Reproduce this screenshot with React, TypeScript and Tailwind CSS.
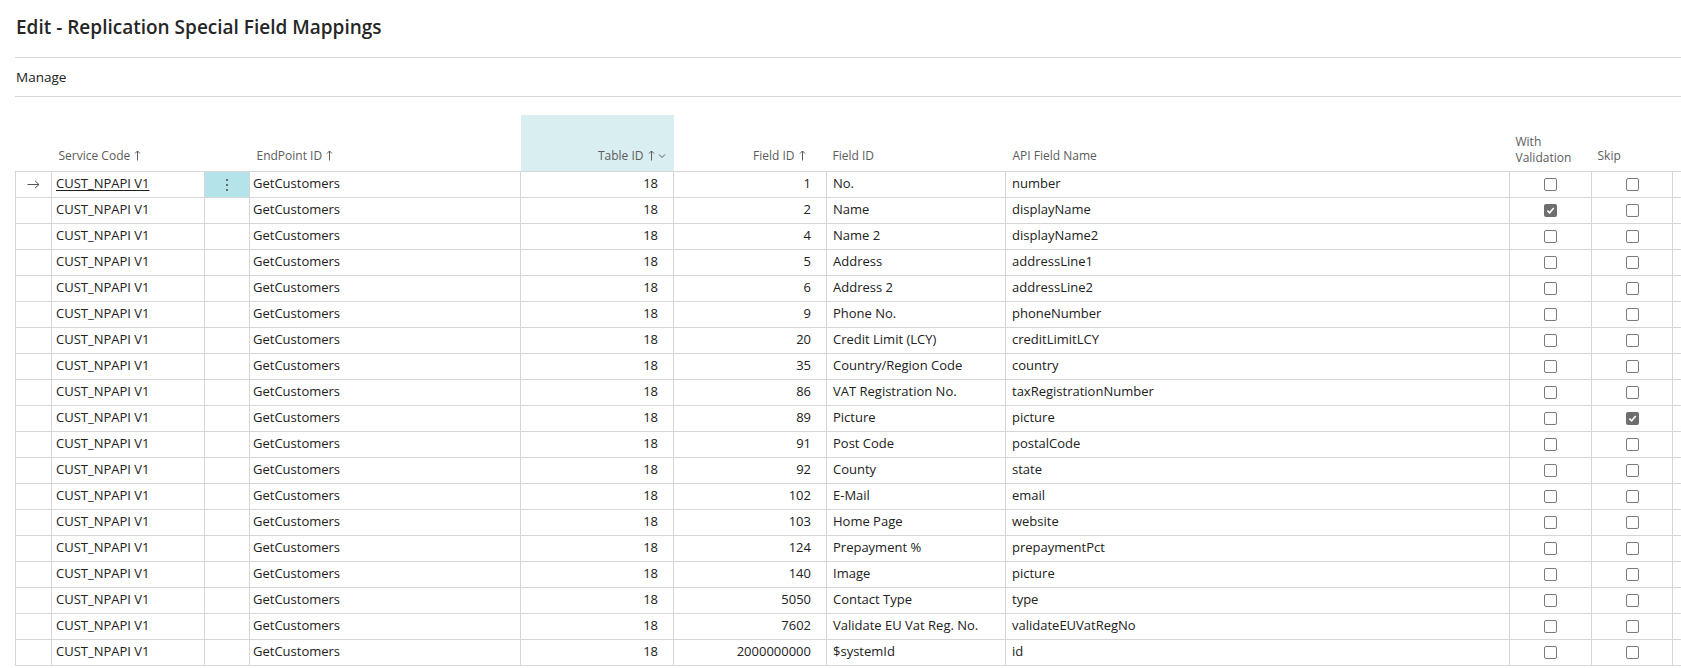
import React from "react";

const rows: [number, string, string, boolean, boolean][] = [
  [1, "No.", "number", false, false],
  [2, "Name", "displayName", true, false],
  [4, "Name 2", "displayName2", false, false],
  [5, "Address", "addressLine1", false, false],
  [6, "Address 2", "addressLine2", false, false],
  [9, "Phone No.", "phoneNumber", false, false],
  [20, "Credit Limit (LCY)", "creditLimitLCY", false, false],
  [35, "Country/Region Code", "country", false, false],
  [86, "VAT Registration No.", "taxRegistrationNumber", false, false],
  [89, "Picture", "picture", false, true],
  [91, "Post Code", "postalCode", false, false],
  [92, "County", "state", false, false],
  [102, "E-Mail", "email", false, false],
  [103, "Home Page", "website", false, false],
  [124, "Prepayment %", "prepaymentPct", false, false],
  [140, "Image", "picture", false, false],
  [5050, "Contact Type", "type", false, false],
  [7602, "Validate EU Vat Reg. No.", "validateEUVatRegNo", false, false],
  [2000000000, "$systemId", "id", false, false],
];

const Check = ({ on }: { on: boolean }) =>
  on ? (
    <span className="inline-flex h-[13px] w-[13px] items-center justify-center rounded-[2px] bg-[#6e6e6e] align-middle">
      <svg width="9" height="9" viewBox="0 0 10 10">
        <path d="M1.5 5.2 L4 7.6 L8.6 2.2" fill="none" stroke="#fff" strokeWidth="1.8" />
      </svg>
    </span>
  ) : (
    <span className="inline-block h-[13px] w-[13px] rounded-[2px] border border-[#7a7a7a] bg-white align-middle" />
  );

// thin sort arrow used in the header labels
const Up = () => (
  <svg className="ml-[4px] inline-block align-[-1px]" width="7" height="11" viewBox="0 0 7 11">
    <path d="M3.5 10.5 V1 M1 3.5 L3.5 1 L6 3.5" fill="none" stroke="#5c5c5c" strokeWidth="1" />
  </svg>
);

const td = "h-[26px] border border-[#d6d6d6] p-0 whitespace-nowrap overflow-hidden";

export default function App() {
  return (
    <div
      className="h-[668px] w-[1681px] overflow-hidden bg-white text-[#212121]"
      style={{ fontFamily: '"Open Sans", "Noto Sans", sans-serif' }}
    >
      <div className="pl-[15px]">
        <div className="flex h-[57px] items-center pl-px pb-[2px] text-[19px] font-semibold text-[#262626]">
          Edit - Replication Special Field Mappings
        </div>
        <div className="flex h-[40px] items-center border-y border-[#d6d6d6] pl-px text-[13.5px]">Manage</div>

        <div className="pt-[18px]">
          <table className="table-fixed border-collapse text-[13px]" style={{ width: 1700 }}>
            <colgroup>
              <col className="w-[36px]" />
              <col className="w-[153px]" />
              <col className="w-[45px]" />
              <col className="w-[271px]" />
              <col className="w-[153px]" />
              <col className="w-[153px]" />
              <col className="w-[179px]" />
              <col className="w-[504px]" />
              <col className="w-[82px]" />
              <col className="w-[81px]" />
              <col className="w-[43px]" />
            </colgroup>
            <thead>
              <tr className="h-[56px] text-[12px] leading-[16px] text-[#5c5c5c]">
                <th />
                <th className="pb-[7px] pl-[7px] text-left align-bottom font-normal">
                  Service Code<Up />
                </th>
                <th />
                <th className="pb-[7px] pl-[7px] text-left align-bottom font-normal">
                  EndPoint ID<Up />
                </th>
                <th className="bg-[#d8eef0] pb-[7px] pr-[8px] text-right align-bottom font-normal">
                  Table ID<Up />
                  <svg className="ml-[3px] inline-block align-middle" width="8" height="6" viewBox="0 0 8 6">
                    <path d="M1 1.5 L4 4.5 L7 1.5" fill="none" stroke="#5c5c5c" strokeWidth="1" />
                  </svg>
                </th>
                <th className="pb-[7px] pr-[21px] text-right align-bottom font-normal">
                  Field ID<Up />
                </th>
                <th className="pb-[7px] pl-[6px] text-left align-bottom font-normal">Field ID</th>
                <th className="pb-[7px] pl-[7px] text-left align-bottom font-normal">API Field Name</th>
                <th className="pb-[5px] pl-[6px] text-left align-bottom font-normal">
                  With
                  <br />
                  Validation
                </th>
                <th className="pb-[7px] pl-[6px] text-left align-bottom font-normal">Skip</th>
                <th />
              </tr>
            </thead>
            <tbody>
              {rows.map(([fid, fname, api, val, skip], i) => (
                <tr key={i}>
                  <td className={`${td} text-center`}>
                    {i === 0 && (
                      <svg className="inline-block" width="13" height="9" viewBox="0 0 13 9">
                        <path d="M0.5 4.5 H12 M8 0.8 L12 4.5 L8 8.2" fill="none" stroke="#555" strokeWidth="1" />
                      </svg>
                    )}
                  </td>
                  <td className={`${td} pl-[4px]`}>
                    <span className={i === 0 ? "underline underline-offset-2" : ""}>CUST_NPAPI V1</span>
                  </td>
                  <td className={`${td} ${i === 0 ? "bg-[#b4e4ea]" : ""} text-center`}>
                    {i === 0 && (
                      <svg className="inline-block" width="4" height="14" viewBox="0 0 4 14">
                        <circle cx="2" cy="2" r="1" fill="#444" />
                        <circle cx="2" cy="7" r="1" fill="#444" />
                        <circle cx="2" cy="12" r="1" fill="#444" />
                      </svg>
                    )}
                  </td>
                  <td className={`${td} pl-[3px]`}>GetCustomers</td>
                  <td className={`${td} pr-[15px] text-right`}>18</td>
                  <td className={`${td} pr-[15px] text-right`}>{fid}</td>
                  <td className={`${td} pl-[6px]`}>{fname}</td>
                  <td className={`${td} pl-[6px]`}>{api}</td>
                  <td className={`${td} text-center`}>
                    <Check on={val} />
                  </td>
                  <td className={`${td} text-center`}>
                    <Check on={skip} />
                  </td>
                  <td className={td} />
                </tr>
              ))}
            </tbody>
          </table>
        </div>
      </div>
    </div>
  );
}
